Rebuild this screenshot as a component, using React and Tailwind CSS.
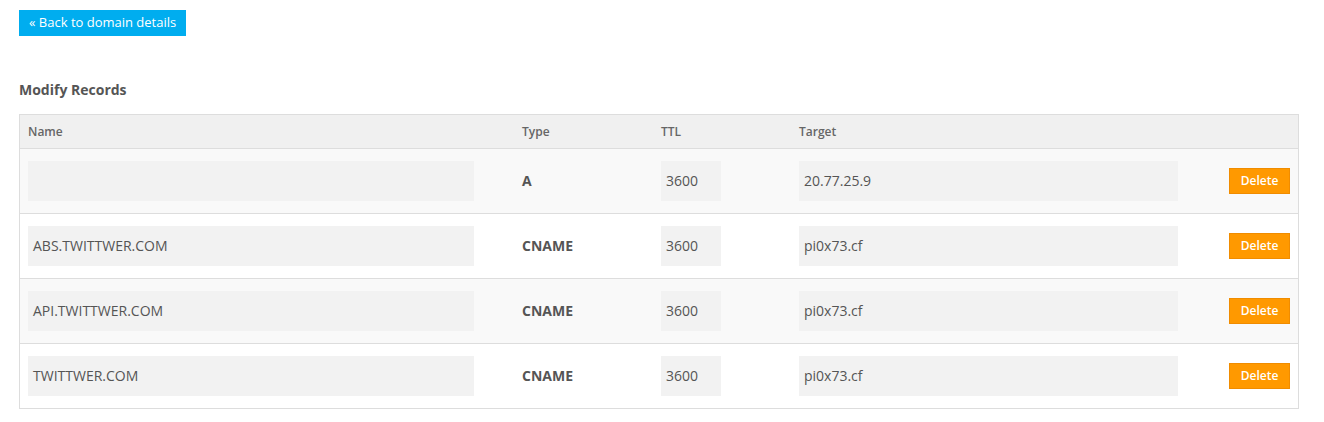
import React from "react";

const records = [
  { name: "", type: "A", ttl: "3600", target: "20.77.25.9" },
  { name: "ABS.TWITTWER.COM", type: "CNAME", ttl: "3600", target: "pi0x73.cf" },
  { name: "API.TWITTWER.COM", type: "CNAME", ttl: "3600", target: "pi0x73.cf" },
  { name: "TWITTWER.COM", type: "CNAME", ttl: "3600", target: "pi0x73.cf" },
];

const Field = ({ value, width }) => (
  <div
    className={`h-10 ${width} bg-[#f2f2f2] pl-[5px] flex items-center text-[14px] text-[#555]`}
  >
    {value}
  </div>
);

export default function App() {
  return (
    <div
      className="min-h-screen bg-white px-[19px] pt-[9px] text-[#555]"
      style={{ fontFamily: '"Open Sans", "Liberation Sans", sans-serif' }}
    >
      <button className="h-[26px] px-[10px] bg-[#00adef] text-white text-[13px] leading-none">
        « Back to domain details
      </button>

      <h2 className="mt-[44px] mb-[14px] text-[14px] leading-5 font-bold text-[#555]">
        Modify Records
      </h2>

      <div className="w-[1280px] border border-[#dddddd]">
        {/* header */}
        <div className="flex bg-[#f0f0f0] text-[12px] font-semibold text-[#666] leading-[17px] py-2 border-b border-[#dddddd]">
          <div className="w-[494px] pl-2">Name</div>
          <div className="w-[139px] pl-2">Type</div>
          <div className="w-[138px] pl-2">TTL</div>
          <div className="flex-1 pl-2">Target</div>
        </div>

        {records.map((r, i) => (
          <div
            key={i}
            className={`flex items-center py-3 ${
              i % 2 === 0 ? "bg-[#f9f9f9]" : "bg-white"
            } ${i > 0 ? "border-t border-[#dddddd]" : ""}`}
          >
            <div className="w-[494px] pl-2">
              <Field value={r.name} width="w-[446px]" />
            </div>
            <div className="w-[139px] pl-2 text-[14px] font-bold text-[#555]">{r.type}</div>
            <div className="w-[138px] pl-2">
              <Field value={r.ttl} width="w-[60px]" />
            </div>
            <div className="w-[397px] pl-2">
              <Field value={r.target} width="w-[379px]" />
            </div>
            <div className="flex-1 flex justify-end pr-2">
              <button className="mt-px w-[61px] h-[26px] bg-[#ff9900] border border-[#f08c00] text-white text-[12px] font-semibold leading-none">
                Delete
              </button>
            </div>
          </div>
        ))}
      </div>
    </div>
  );
}
